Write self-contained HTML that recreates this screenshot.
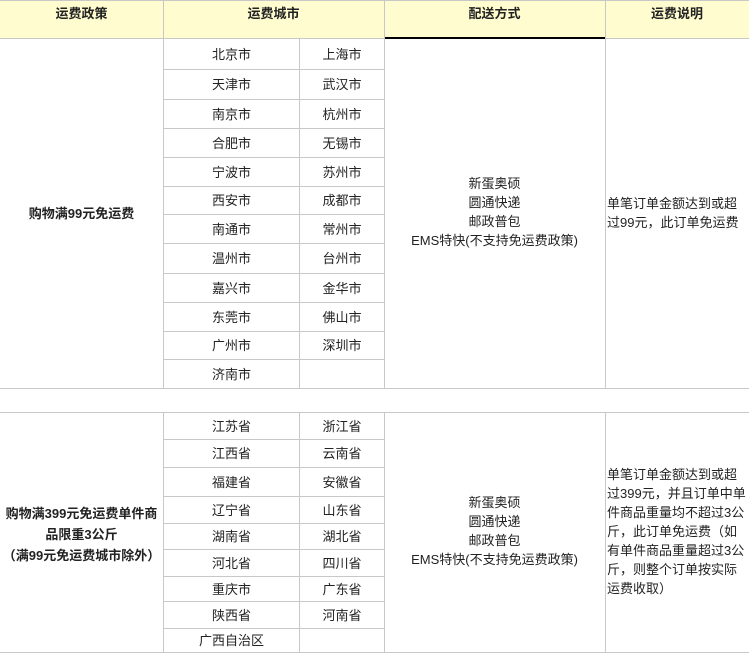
<!DOCTYPE html>
<html><head><meta charset="utf-8"><style>
body{margin:0;width:749px;height:653px;background:#fff;position:relative;overflow:hidden;font-family:"Liberation Sans","Noto Sans CJK SC",sans-serif;font-size:13px;color:#222;}
.a{position:absolute;}
.h{background:#c8c8c8;height:1px;}
.v{background:#c8c8c8;width:1px;}
.c{position:absolute;text-align:center;line-height:19px;}
.b{font-weight:bold;}
</style></head><body>
<div class="a" style="left:0;top:0;width:749px;height:38px;background:#fffdd0"></div>
<div class="a h" style="left:0;top:0;width:749px"></div>
<div class="a h" style="left:0;top:38px;width:384px"></div>
<div class="a" style="left:384px;top:37px;width:221px;height:2px;background:#000"></div>
<div class="a h" style="left:605px;top:38px;width:144px"></div>
<div class="c b" style="left:0;top:4px;width:163px">运费政策</div>
<div class="c b" style="left:163px;top:4px;width:221px">运费城市</div>
<div class="c b" style="left:384px;top:4px;width:221px">配送方式</div>
<div class="c b" style="left:605px;top:4px;width:144px">运费说明</div>
<div class="a v" style="left:163px;top:0;height:388px"></div>
<div class="a v" style="left:163px;top:412px;height:241px"></div>
<div class="a v" style="left:384px;top:0;height:388px"></div>
<div class="a v" style="left:384px;top:412px;height:241px"></div>
<div class="a v" style="left:605px;top:0;height:388px"></div>
<div class="a v" style="left:605px;top:412px;height:241px"></div>
<div class="a v" style="left:299px;top:38px;height:350px"></div>
<div class="a v" style="left:299px;top:412px;height:241px"></div>
<div class="a h" style="left:0;top:388px;width:749px"></div>
<div class="a h" style="left:0;top:412px;width:749px"></div>
<div class="a h" style="left:0;top:652px;width:749px"></div>
<div id="s1"></div>
<div class="c b" style="left:0;top:204px;width:163px">购物满99元免运费</div>
<div class="c" style="left:384px;top:174px;width:221px">新蛋奥硕<br>圆通快递<br>邮政普包<br>EMS特快(不支持免运费政策)</div>
<div class="a" style="left:607px;top:194px;width:142px;line-height:19px">单笔订单金额达到或超过99元，此订单免运费</div>
<div class="c b" style="left:0;top:503px;width:163px;line-height:21px">购物满399元免运费单件商品限重3公斤<br>（满99元免运费城市除外）</div>
<div class="c" style="left:384px;top:493px;width:221px">新蛋奥硕<br>圆通快递<br>邮政普包<br>EMS特快(不支持免运费政策)</div>
<div class="a" style="left:607px;top:465px;width:142px;line-height:19px">单笔订单金额达到或超过399元，并且订单中单件商品重量均不超过3公斤，此订单免运费（如有单件商品重量超过3公斤，则整个订单按实际运费收取）</div>
<script>
var L1=[38,69,99,128,157,186,214,243,273,302,331,359,388];
var C1=[["北京市","上海市"],["天津市","武汉市"],["南京市","杭州市"],["合肥市","无锡市"],["宁波市","苏州市"],["西安市","成都市"],["南通市","常州市"],["温州市","台州市"],["嘉兴市","金华市"],["东莞市","佛山市"],["广州市","深圳市"],["济南市",""]];
var L2=[412,439,467,496,523,549,576,601,628,652];
var C2=[["江苏省","浙江省"],["江西省","云南省"],["福建省","安徽省"],["辽宁省","山东省"],["湖南省","湖北省"],["河北省","四川省"],["重庆市","广东省"],["陕西省","河南省"],["广西自治区",""]];
var h="";
function go(L,C){for(var i=0;i<C.length;i++){var t=L[i],b=L[i+1],m=(t+b)/2-9;
if(i>0)h+='<div class="a h" style="left:163px;top:'+t+'px;width:221px"></div>';
h+='<div class="c" style="left:164px;top:'+m+'px;width:135px">'+C[i][0]+'</div>';
h+='<div class="c" style="left:300px;top:'+m+'px;width:84px">'+C[i][1]+'</div>';}}
go(L1,C1);go(L2,C2);
document.getElementById("s1").innerHTML=h;
</script>
</body></html>
